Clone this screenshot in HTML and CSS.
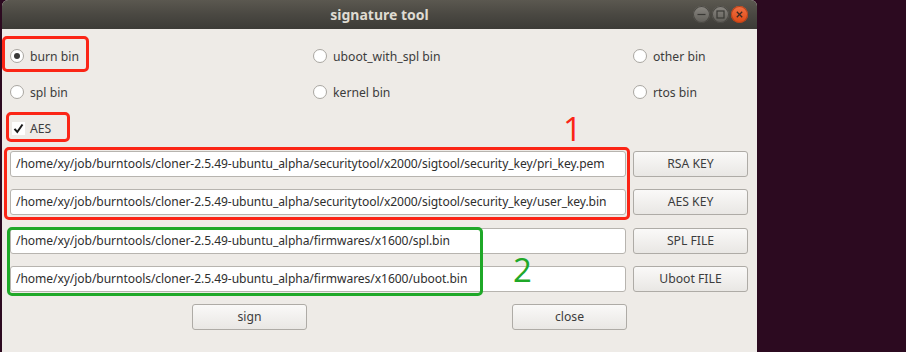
FILE: index.html
```html
<!DOCTYPE html>
<html>
<head>
<meta charset="utf-8">
<title>signature tool</title>
<link rel="stylesheet" href="styles.css">
</head>
<body>
<div class="window">
  <div class="titlebar">
    <span class="title">signature tool</span>
    <div class="controls">
      <span class="wbtn wmin"><svg width="17" height="17" viewBox="0 0 17 17"><path d="M4.5 8.5h8" stroke="#3a3935" stroke-width="1.2"/></svg></span>
      <span class="wbtn wmax"><svg width="17" height="17" viewBox="0 0 17 17"><rect x="5" y="5" width="7" height="7" fill="none" stroke="#3a3935" stroke-width="1.2"/></svg></span>
      <span class="wbtn wclose"><svg width="17" height="17" viewBox="0 0 17 17"><path d="M5.8 5.8l5.4 5.4M11.2 5.8l-5.4 5.4" stroke="#3b2a22" stroke-width="1.3"/></svg></span>
    </div>
  </div>
  <div class="content">
    <div class="options">
      <label class="opt"><span class="radio checked"></span>burn bin</label>
      <label class="opt"><span class="radio"></span>uboot_with_spl bin</label>
      <label class="opt"><span class="radio"></span>other bin</label>
      <label class="opt"><span class="radio"></span>spl bin</label>
      <label class="opt"><span class="radio"></span>kernel bin</label>
      <label class="opt"><span class="radio"></span>rtos bin</label>
      <label class="opt opt-check"><span class="check"><svg width="13" height="13" viewBox="0 0 13 13"><path d="M2.5 6.8l2.8 3.2 5.2-7.5" fill="none" stroke="#1a1a1a" stroke-width="2"/></svg></span>AES</label>
    </div>
    <div class="fields">
      <div class="row"><div class="field">/home/xy/job/burntools/cloner-2.5.49-ubuntu_alpha/securitytool/x2000/sigtool/security_key/pri_key.pem</div><div class="btn">RSA KEY</div></div>
      <div class="row"><div class="field">/home/xy/job/burntools/cloner-2.5.49-ubuntu_alpha/securitytool/x2000/sigtool/security_key/user_key.bin</div><div class="btn">AES KEY</div></div>
      <div class="row"><div class="field">/home/xy/job/burntools/cloner-2.5.49-ubuntu_alpha/firmwares/x1600/spl.bin</div><div class="btn">SPL FILE</div></div>
      <div class="row"><div class="field">/home/xy/job/burntools/cloner-2.5.49-ubuntu_alpha/firmwares/x1600/uboot.bin</div><div class="btn">Uboot FILE</div></div>
    </div>
    <div class="actions">
      <div class="btn">sign</div>
      <div class="btn">close</div>
    </div>
  </div>
  <div class="mark red mark-burn"></div>
  <div class="mark red mark-aes"></div>
  <div class="mark red mark-keys"></div>
  <div class="mark green mark-files"></div>
  <span class="num num-red">1</span>
  <span class="num num-green">2</span>
</div>
</body>
</html>
```

FILE: styles.css
```css
html, body {
  margin: 0;
  padding: 0;
}
body {
  background: #2c0a20;
  width: 906px;
  height: 352px;
  overflow: hidden;
  font-family: "Noto Sans", "DejaVu Sans", sans-serif;
  color: #3c3c3c;
}
.window {
  position: relative;
  margin-left: 2px;
  width: 755px;
  height: 352px;
  background: #eeebe7;
  border-radius: 6px 6px 0 0;
}
.titlebar {
  position: relative;
  height: 29px;
  border-radius: 6px 6px 0 0;
  background: linear-gradient(to bottom, #5b5850 0%, #4a4842 50%, #3c3b37 100%);
  text-align: center;
}
.title {
  display: inline-block;
  line-height: 29px;
  font-weight: bold;
  font-size: 14px;
  color: #dfdbd2;
}
.controls {
  position: absolute;
  right: 9px;
  top: 6px;
  display: flex;
  gap: 2px;
}
.wbtn {
  width: 17px;
  height: 17px;
  border-radius: 50%;
  display: block;
}
.wbtn svg { display: block; }
.wmin, .wmax {
  background: linear-gradient(to bottom, #8a8781, #5f5d58);
  box-shadow: inset 0 0 0 1px #4a4843;
}
.wclose {
  background: linear-gradient(to bottom, #f27245, #dd4814);
  box-shadow: inset 0 0 0 1px #b5431b;
}
.content {
  padding-top: 9px;
}
.options {
  display: grid;
  grid-template-columns: 303px 320px 1fr;
  grid-auto-rows: 36px;
  padding-left: 8px;
  font-size: 12.2px;
}
.opt {
  display: flex;
  align-items: center;
  gap: 6px;
}
.radio {
  width: 12px;
  height: 12px;
  border-radius: 50%;
  border: 1px solid #a9a6a1;
  background: #fff;
  position: relative;
  flex: none;
}
.radio.checked::after {
  content: "";
  position: absolute;
  left: 3px;
  top: 3px;
  width: 6px;
  height: 6px;
  border-radius: 50%;
  background: #3a3a3a;
}
.opt-check {
  padding-left: 2px;
  gap: 5px;
}
.check {
  width: 13px;
  height: 13px;
  background: #fff;
  display: block;
  flex: none;
}
.check svg { display: block; }
.fields {
  padding: 5px 0 0 8px;
  display: flex;
  flex-direction: column;
  gap: 12.4px;
}
.row {
  display: flex;
  gap: 7px;
  height: 26px;
}
.field {
  width: 616px;
  box-sizing: border-box;
  height: 26px;
  line-height: 24px;
  border: 1px solid #b7b4af;
  border-radius: 3px;
  background: #fff;
  padding-left: 5px;
  font-size: 12.1px;
  letter-spacing: -0.08px;
  white-space: nowrap;
  overflow: hidden;
  color: #2e2e2e;
}
.btn {
  width: 115px;
  height: 26px;
  box-sizing: border-box;
  line-height: 24px;
  text-align: center;
  border: 1px solid #aeaba6;
  border-radius: 3px;
  background: linear-gradient(to bottom, #faf9f8, #e9e7e4);
  font-size: 12.2px;
  color: #3c3c3c;
}
.actions {
  display: flex;
  gap: 205px;
  padding: 12px 0 0 190px;
}
.mark {
  position: absolute;
  box-sizing: border-box;
  border-width: 3.5px;
  border-style: solid;
  border-radius: 5px;
}
.red { border-color: #fb2516; }
.green { border-color: #1fa828; }
.mark-burn { left: 0; top: 36px; width: 87px; height: 36px; }
.mark-aes { left: 4px; top: 112px; width: 64px; height: 30px; }
.mark-keys { left: 2px; top: 147px; width: 626px; height: 73px; }
.mark-files { left: 5px; top: 227px; width: 476px; height: 69px; }
.num {
  position: absolute;
  font-size: 33px;
  line-height: 1;
  font-family: "Open Sans", "Noto Sans", sans-serif;
}
.num-red { left: 561px; top: 112px; color: #fb2516; }
.num-green { left: 511px; top: 253px; color: #1fa828; }
```
